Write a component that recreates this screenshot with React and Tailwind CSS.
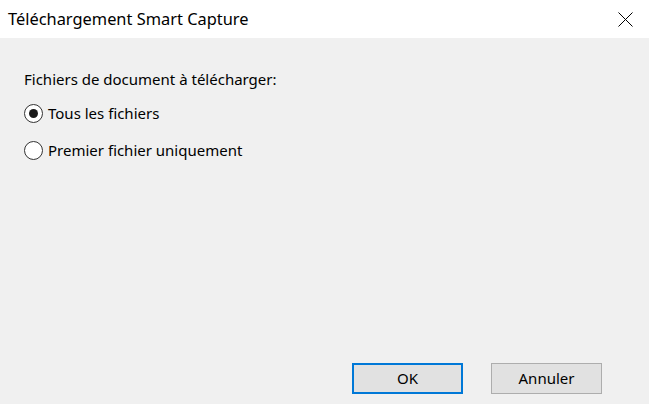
import React, { useState } from 'react';

const options = [
    { id: 'all', label: 'Tous les fichiers' },
    { id: 'first', label: 'Premier fichier uniquement' },
];

const Radio = ({ checked, label, onClick }) => (
    <button type="button" onClick={onClick} className="flex items-center h-[20px] text-left">
        <span className="w-[19px] h-[19px] rounded-full border border-[#333333] bg-white flex items-center justify-center shrink-0">
            {checked && <span className="w-[9px] h-[9px] rounded-full bg-[#1a1a1a]" />}
        </span>
        <span className="ml-[5px] text-[15px] leading-none text-black">{label}</span>
    </button>
);

const App = () => {
    const [selected, setSelected] = useState('all');

    return (
        <div className="w-[649px] h-[404px] flex flex-col bg-[#f0f0f0] overflow-hidden" style={{ fontFamily: '"Noto Sans", sans-serif' }}>
            <div className="h-[38px] bg-white flex items-center justify-between shrink-0">
                <span className="ml-[8px] text-[16.4px] text-black">Téléchargement Smart Capture</span>
                <button type="button" className="mr-[16px] w-[15px] h-[15px] flex items-center justify-center">
                    <svg width="15" height="15" viewBox="0 0 15 15">
                        <path d="M0.5 0.5 L14.5 14.5 M14.5 0.5 L0.5 14.5" stroke="#000" strokeWidth="1" />
                    </svg>
                </button>
            </div>

            <div className="flex-1 flex flex-col px-[24px] pt-[34px]">
                <p className="text-[15px] leading-none text-black">Fichiers de document à télécharger:</p>
                <div className="flex flex-col gap-[17px] mt-[16px]">
                    {options.map((o) => (
                        <Radio key={o.id} label={o.label} checked={selected === o.id} onClick={() => setSelected(o.id)} />
                    ))}
                </div>
            </div>

            <div className="flex justify-end gap-[28px] pr-[47px] pb-[10px]">
                <button type="button" className="w-[111px] h-[31px] border-2 border-[#0078d7] bg-[#e1e1e1] text-[15px] text-black">OK</button>
                <button type="button" className="w-[111px] h-[31px] border border-[#adadad] bg-[#e1e1e1] text-[15px] text-black">Annuler</button>
            </div>
        </div>
    );
};

export default App;
